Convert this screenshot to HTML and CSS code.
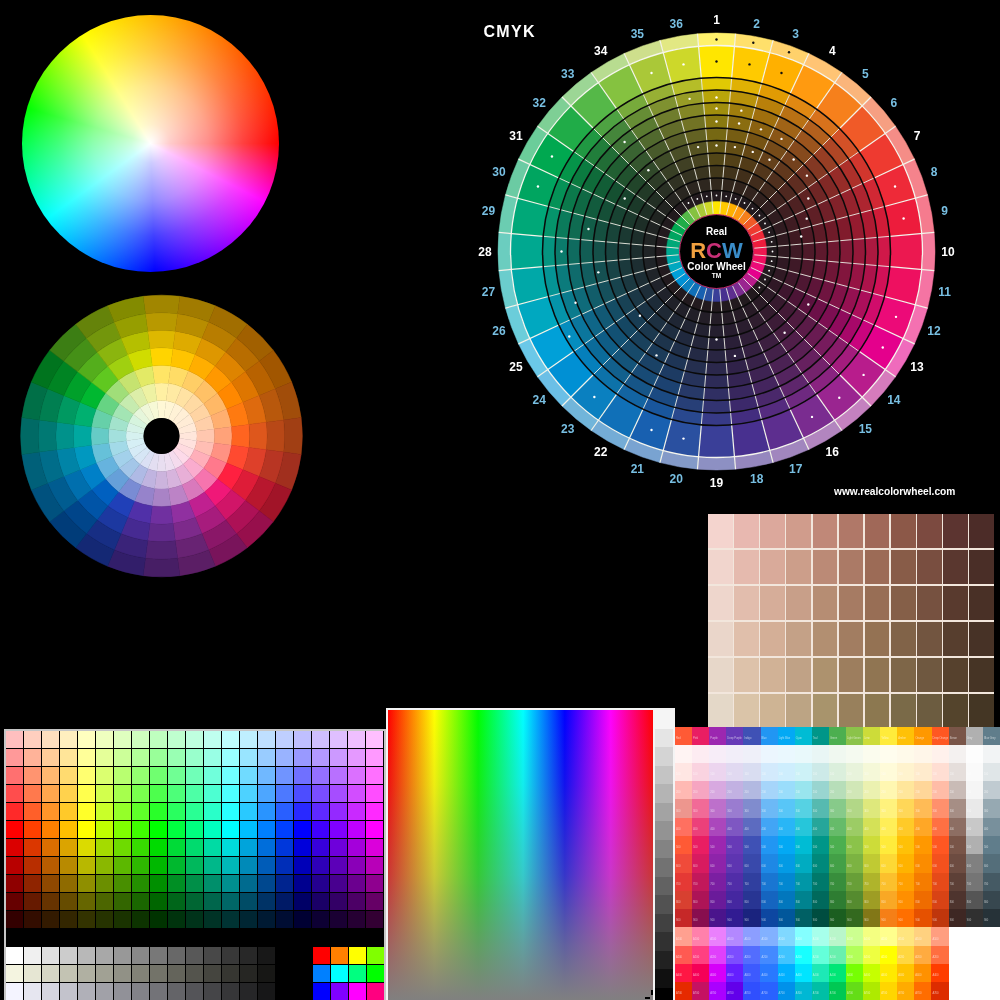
FILE: index.html
```html
<!DOCTYPE html>
<html lang="en">
<head>
<meta charset="utf-8">
<title>Colour wheels and palettes</title>
<link rel="stylesheet" href="styles.css">
</head>
<body>
<main class="board">
  <div class="piece hsv-wheel"></div>
  <svg class="piece tone-wheel" id="tone" viewBox="10 285 310 310"></svg>
  <svg class="piece rcw" id="rcw" viewBox="470 0 530 505"></svg>
  <div class="piece skin" id="skin"></div>
  <div class="piece web-frame">
    <div class="web-grid" id="web"></div>
    <div class="web-bottom">
      <div class="grey-grid" id="greys"></div>
      <div class="prim-grid" id="prims"></div>
    </div>
  </div>
  <div class="piece picker">
    <div class="picker-field">
      <span class="mark mark-a"></span>
      <span class="mark mark-b"></span>
    </div>
    <div class="picker-strip" id="strip"></div>
  </div>
  <div class="piece material">
    <div class="mat-main" id="mat"></div>
    <div class="mat-accent" id="acc"></div>
  </div>
</main>
<script src="app.js"></script>
</body>
</html>
```
FILE: styles.css
```css
html, body {
  margin: 0;
  padding: 0;
  background: #000;
}
.board {
  position: relative;
  width: 1000px;
  height: 1000px;
  overflow: hidden;
  background: #000;
  font-family: "Liberation Sans", Arial, sans-serif;
}
.piece {
  position: absolute;
  display: block;
}
.hsv-wheel {
  left: 21.5px;
  top: 14.5px;
  width: 257px;
  height: 257px;
  border-radius: 50%;
  filter: blur(0.5px);
  background:
    radial-gradient(circle closest-side, #fff 0%, rgba(255,255,255,0.8) 15%, rgba(255,255,255,0.55) 45%, rgba(255,255,255,0.25) 72%, rgba(255,255,255,0) 100%),
    conic-gradient(#ffbc00 0deg, #ff0000 90deg, #ff00ff 117deg, #0000ff 178deg, #00ffff 234deg, #00ff00 286deg, #ffff00 328deg, #ffbc00 360deg);
}
.tone-wheel {
  left: 10px;
  top: 285px;
  width: 310px;
  height: 310px;
  filter: blur(0.5px);
}
.rcw {
  left: 470px;
  top: 0;
  width: 530px;
  height: 505px;
  filter: blur(0.4px);
}
.lbl {
  font: bold 12px "Liberation Sans", Arial, sans-serif;
  text-anchor: middle;
  dominant-baseline: central;
  fill: #78bfe2;
}
.lbl-w { fill: #fff; }
.cmyk {
  font: bold 16px "Liberation Sans", Arial, sans-serif;
  letter-spacing: 1.3px;
  fill: #fff;
}
.url {
  font: bold 10.2px "Liberation Sans", Arial, sans-serif;
  fill: #fff;
}
.hub {
  font: bold 10px "Liberation Sans", Arial, sans-serif;
  text-anchor: middle;
  fill: #fff;
}
.hub-big {
  font: bold 22px "Liberation Sans", Arial, sans-serif;
  text-anchor: middle;
}
.hub-tm { font-size: 6.5px; }

.skin {
  left: 708px;
  top: 514px;
  width: 286px;
  height: 214px;
  display: grid;
  grid-template-columns: repeat(11, 1fr);
  grid-template-rows: repeat(6, 1fr);
  gap: 1.5px;
  background: #f2e6dc;
  filter: blur(0.3px);
}

.web-frame {
  left: 4px;
  top: 729px;
  width: 378px;
  height: 280px;
  background: #000;
  border: 2px solid #c6c6c6;
  border-bottom: 0;
  display: flex;
  flex-direction: column;
  gap: 19px;
}
.web-grid {
  display: grid;
  grid-template-columns: repeat(21, 17px);
  grid-auto-rows: 17px;
  gap: 1px;
}
.web-bottom {
  display: flex;
  justify-content: space-between;
}
.grey-grid {
  display: grid;
  grid-template-columns: repeat(15, 17px);
  grid-auto-rows: 17px;
  gap: 1px;
}
.prim-grid {
  display: grid;
  grid-template-columns: repeat(4, 17.5px);
  grid-auto-rows: 17px;
  gap: 1px 0.5px;
}

.picker {
  left: 386px;
  top: 708px;
  width: 285px;
  height: 300px;
  display: flex;
  gap: 2px;
  border: 2px solid #f4f4f4;
  border-bottom: 0;
  background: #f4f4f4;
}
.picker-field {
  position: relative;
  width: 265px;
  height: 300px;
  background:
    linear-gradient(rgba(128,128,128,0) 0%, rgba(128,128,128,0.14) 25%, rgba(128,128,128,0.42) 55%, rgba(128,128,128,0.75) 78%, rgba(128,128,128,1) 97%),
    linear-gradient(90deg, #f00 0%, #ff0 17.5%, #0f0 34%, #0ff 51%, #00f 66.7%, #f0f 84%, #f00 100%);
}
.mark {
  position: absolute;
  background: #000;
}
.mark-a {
  left: 263px;
  top: 280px;
  width: 2px;
  height: 5px;
}
.mark-b {
  left: 257px;
  top: 287px;
  width: 5px;
  height: 2px;
}
.picker-strip {
  width: 18px;
  display: flex;
  flex-direction: column;
}
.step { height: 18.5px; flex: none; }

.material {
  left: 675px;
  top: 727px;
  width: 325px;
  height: 273px;
  background: #fff;
  overflow: hidden;
  filter: blur(0.5px);
}
.mat-main {
  display: grid;
  grid-template-columns: repeat(19, 1fr);
  grid-template-rows: 17.5px repeat(10, 18.3px);
}
.mat-accent {
  display: grid;
  grid-template-columns: repeat(16, 17.105px);
  grid-auto-rows: 18.2px;
}
.mat-cell {
  display: flex;
  align-items: flex-end;
  justify-content: flex-start;
  padding: 0 0 5px 1px;
  min-width: 0;
  overflow: hidden;
  white-space: nowrap;
  font: 2.6px "Liberation Sans", Arial, sans-serif;
  color: rgba(255,255,255,0.6);
  box-sizing: border-box;
}
```
FILE: app.js
```js
var NS = 'http://www.w3.org/2000/svg';

function hex(c) { return [parseInt(c.slice(1,3),16), parseInt(c.slice(3,5),16), parseInt(c.slice(5,7),16)]; }
function mix(a, b, t) {
  var x = hex(a), y = hex(b), o = '#';
  for (var i = 0; i < 3; i++) {
    var v = Math.round(x[i] + (y[i] - x[i]) * t);
    v = Math.max(0, Math.min(255, v));
    o += (v < 16 ? '0' : '') + v.toString(16);
  }
  return o;
}
function el(parent, name, attrs, text) {
  var e = document.createElementNS(NS, name);
  for (var k in attrs) e.setAttribute(k, attrs[k]);
  if (text !== undefined) e.textContent = text;
  parent.appendChild(e);
  return e;
}
function pt(cx, cy, r, deg) {
  var a = (deg - 90) * Math.PI / 180;
  return [cx + r * Math.cos(a), cy + r * Math.sin(a)];
}
function sector(cx, cy, r0, r1, a0, a1) {
  var p = pt(cx,cy,r1,a0), q = pt(cx,cy,r1,a1), s = pt(cx,cy,r0,a1), t = pt(cx,cy,r0,a0);
  return 'M' + p[0].toFixed(2) + ' ' + p[1].toFixed(2) +
    'A' + r1 + ' ' + r1 + ' 0 0 1 ' + q[0].toFixed(2) + ' ' + q[1].toFixed(2) +
    'L' + s[0].toFixed(2) + ' ' + s[1].toFixed(2) +
    'A' + r0 + ' ' + r0 + ' 0 0 0 ' + t[0].toFixed(2) + ' ' + t[1].toFixed(2) + 'Z';
}
function wedge(svg, cx, cy, r0, r1, a0, a1, fill) {
  el(svg, 'path', { d: sector(cx,cy,r0,r1,a0,a1), fill: fill, stroke: fill, 'stroke-width': 0.5 });
}
function cell(parent, color, cls, text) {
  var d = document.createElement('div');
  d.style.background = color;
  if (cls) d.className = cls;
  if (text) d.textContent = text;
  parent.appendChild(d);
}

/* ---------- 24-sector tone wheel ---------- */
(function () {
  var svg = document.getElementById('tone');
  var cx = 161.5, cy = 436, step = 17.55;
  var hues = ['#ffd400','#ffc400','#ffae00','#ff9800','#ff8800','#ff7a10','#ff6420','#ff4a30',
    '#ff2040','#f01878','#c02090','#9030a0','#7030a0','#5030a8','#2040b8','#0060c0',
    '#0080c8','#0098c0','#00a8a0','#00b070','#00b830','#60c820','#a0d010','#d0dc00'];
  var rings = [[.84,'#ffffff'],[.64,'#ffffff'],[.4,'#ffffff'],[0,'#000000'],[.13,'#000000'],[.28,'#000000'],[.37,'#000000']];
  hues.forEach(function (h, i) {
    rings.forEach(function (ring, j) {
      wedge(svg, cx, cy, 18 + j * step, 18 + (j + 1) * step, i * 15 - 7.5, i * 15 + 7.5, mix(h, ring[1], ring[0]));
    });
  });
  el(svg, 'circle', { cx: cx, cy: cy, r: 18, fill: '#000' });
})();

/* ---------- Real Color Wheel ---------- */
(function () {
  var svg = document.getElementById('rcw');
  var cx = 716.5, cy = 251.5;
  var segs = ['#ffe600','#ffca00','#ffb000','#ff9a10','#f6801c','#f05a28','#ee3a30','#ee2a38','#ed1c3c',
    '#ec1850','#ee1060','#ec0a78','#e4008c','#b81c8c','#9a2590','#7a2c90','#5d2e8f','#48308f',
    '#3a3f98','#2a50a0','#1860b0','#1070b8','#0a80c0','#0090d4','#00a0d8','#00a8c0','#00a8a8',
    '#00a890','#00a878','#00a560','#00a850','#20ac48','#55b848','#85c240','#aac838','#cdd82a'];
  var radii = [174, 161.5, 149, 136.5, 123.5, 111, 98.5, 86, 73.5, 61, 50];
  var dark = '#221a1e';

  segs.forEach(function (c, i) {
    var a0 = i * 10 - 5, a1 = i * 10 + 5;
    wedge(svg, cx, cy, 206, 218.5, a0, a1, mix(c, '#ffffff', 0.42));
    wedge(svg, cx, cy, 174, 206, a0, a1, c);
    for (var b = 0; b < radii.length - 1; b++) {
      var t = 0.14 + 0.86 * Math.pow(b / 9, 0.72);
      wedge(svg, cx, cy, radii[b + 1], radii[b], a0, a1, mix(c, dark, t));
    }
    wedge(svg, cx, cy, 37, 50, a0, a1, c);
  });

  /* radial separators */
  for (var k = 0; k < 36; k++) {
    var ang = k * 10 + 5;
    var a = pt(cx, cy, 218.5, ang), b = pt(cx, cy, 174, ang), c2 = pt(cx, cy, 38, ang);
    el(svg, 'line', { x1: a[0], y1: a[1], x2: b[0], y2: b[1], stroke: '#f4f4ea', 'stroke-width': 1.2 });
    el(svg, 'line', { x1: b[0], y1: b[1], x2: c2[0], y2: c2[1], stroke: '#f0f0e8', 'stroke-width': 0.9 });
  }

  /* rings */
  el(svg, 'circle', { cx: cx, cy: cy, r: 206, fill: 'none', stroke: '#f6f6ee', 'stroke-width': 1.3 });
  radii.slice(0, 10).forEach(function (r) {
    el(svg, 'circle', { cx: cx, cy: cy, r: r, fill: 'none', stroke: '#0a0a0a', 'stroke-width': 1.5 });
  });

  /* printer's dots: [segment, radius, colour] */
  var dots = [[1,212,0],[1,190,0],[2,212,0],[2,190,0],[3,212,0],[3,190,0],
    [36,190,1],[35,190,1],[31,190,1],[30,190,1],[13,192,1],[12,191,1],[14,192,1],[15,191,1],[16,191,1],
    [8,190,1],[9,190,1],[20,190,1],[21,190,1],[23,190,1],[25,170,1],[28,155,1],[33,143,1],[33,106,1],
    [31,106,1],[36,155,1],[36,106,1],[1,154,1],[1,143,1],[1,130,1],[1,106,1],[2,143,1],[2,130,1],[2,106,1],
    [3,130,1],[3,106,1],[4,130,1],[4,106,1],[5,120,1],[6,118,1],[7,106,1],[8,96,1],[9,86,1],[13,106,1],[15,106,1],
    [18,106,1],[19,88,1],[22,120,1],[24,100,1],[26,150,1],[27,120,1],[29,130,1]];
  for (var s = 0; s < 17; s++) dots.push([(s + 33) % 36 + 1, 56, 1]);
  dots.forEach(function (d) {
    var p = pt(cx, cy, d[1], (d[0] - 1) * 10);
    el(svg, 'circle', { cx: p[0], cy: p[1], r: d[1] > 70 ? 1.2 : 0.9, fill: d[2] ? '#fff' : '#111' });
  });

  /* hub */
  el(svg, 'circle', { cx: cx, cy: cy, r: 37, fill: '#000', stroke: '#c82c6c', 'stroke-width': 1 });
  el(svg, 'text', { class: 'hub', x: cx, y: 235 }, 'Real');
  var big = el(svg, 'text', { class: 'hub-big', x: cx, y: 258 });
  [['R','#f0a040'],['C','#c83078'],['W','#3a8cc8']].forEach(function (l) {
    el(big, 'tspan', { fill: l[1] }, l[0]);
  });
  el(svg, 'text', { class: 'hub', x: cx, y: 270 }, 'Color Wheel');
  el(svg, 'text', { class: 'hub hub-tm', x: cx, y: 278 }, 'TM');

  /* numbers */
  for (var n = 1; n <= 36; n++) {
    var q = pt(cx, cy, 231.5, (n - 1) * 10);
    el(svg, 'text', { class: n % 3 === 1 ? 'lbl lbl-w' : 'lbl', x: q[0], y: q[1] }, String(n));
  }
  el(svg, 'text', { class: 'cmyk', x: 483.5, y: 37 }, 'CMYK');
  el(svg, 'text', { class: 'url', x: 834, y: 495 }, 'www.realcolorwheel.com');
})();

/* ---------- skin tones ---------- */
(function () {
  var top = ['#f4d4ce','#e8b8b0','#dca89c','#d09c8c','#c08878','#b07868','#a06858','#8c5848','#7c4a40','#5c3430','#4c2c28'];
  var low = ['#e4d8c8','#dac4a8','#ceb494','#bca484','#a8946c','#98805c','#8c7850','#7a6a48','#6c5c40','#54442c','#443624'];
  var box = document.getElementById('skin');
  for (var r = 0; r < 6; r++) for (var c = 0; c < 11; c++) cell(box, mix(top[c], low[c], r / 5));
})();

/* ---------- web palette ---------- */
(function () {
  var hues = ['#ff0000','#ff4000','#ff8000','#ffbf00','#ffff00','#bfff00','#80ff00','#40ff00','#00ff00','#00ff40','#00ff80',
    '#00ffbf','#00ffff','#00bfff','#0080ff','#0040ff','#0000ff','#4000ff','#8000ff','#bf00ff','#ff00ff'];
  var steps = [['#ffffff',.75],['#ffffff',.6],['#ffffff',.44],['#ffffff',.3],['#ffffff',.16],['#000000',0],
    ['#000000',.14],['#000000',.28],['#000000',.44],['#000000',.6],['#000000',.8]];
  var web = document.getElementById('web');
  steps.forEach(function (st) { hues.forEach(function (h) { cell(web, mix(h, st[0], st[1])); }); });

  var g = ['#ffffff','#f0f0f0','#e0e0e0','#cccccc','#b8b8b8','#a8a8a8','#989898','#888888','#787878','#686868','#585858','#484848','#383838','#282828','#181818'];
  var tint = ['#ffffff','#f4f4e0','#f4f4ff'];
  var greys = document.getElementById('greys');
  tint.forEach(function (t) {
    g.forEach(function (v) {
      var a = hex(v), b = hex(t), o = '#';
      for (var i = 0; i < 3; i++) { var x = Math.round(a[i] * b[i] / 255); o += (x < 16 ? '0' : '') + x.toString(16); }
      cell(greys, o);
    });
  });
  var prims = document.getElementById('prims');
  ['#ff0000','#ff8000','#ffff00','#80ff00','#0080ff','#00ffff','#00ff80','#00ff00','#0000ff','#8000ff','#ff00ff','#ff0080']
    .forEach(function (c) { cell(prims, c); });

  var strip = document.getElementById('strip');
  for (var i = 0; i < 16; i++) {
    var v = Math.round(245 - i * 245 / 15);
    cell(strip, mix('#000000', '#ffffff', v / 255), 'step');
  }
})();

/* ---------- material palette ---------- */
(function () {
  var names = ['Red','Pink','Purple','Deep Purple','Indigo','Blue','Light Blue','Cyan','Teal','Green','Light Green','Lime','Yellow','Amber','Orange','Deep Orange','Brown','Grey','Blue Grey'];
  var t = [
    ['#ffd8d4','#ffa8a0','#ec9088','#ff7060','#ff5a35','#f04b3a','#e53935','#d84030','#c62828'],
    ['#f8bbd0','#f48fb1','#f06292','#ec407a','#e91e63','#d81b60','#c2185b','#ad1457','#880e4f'],
    ['#e1bee7','#ce93d8','#ba68c8','#ab47bc','#9c27b0','#8e24aa','#7b1fa2','#6a1b9a','#4a148c'],
    ['#d1c4e9','#b39ddb','#9575cd','#7e57c2','#673ab7','#5e35b1','#512da8','#4527a0','#311b92'],
    ['#c5cae9','#9fa8da','#7986cb','#5c6bc0','#3f51b5','#3949ab','#303f9f','#283593','#1a237e'],
    ['#bbdefb','#90caf9','#64b5f6','#42a5f5','#2196f3','#1e88e5','#1976d2','#1565c0','#0d47a1'],
    ['#b3e5fc','#81d4fa','#4fc3f7','#29b6f6','#03a9f4','#039be5','#0288d1','#0277bd','#01579b'],
    ['#b2ebf2','#80deea','#4dd0e1','#26c6da','#00bcd4','#00acc1','#0097a7','#00838f','#006064'],
    ['#b2dfdb','#80cbc4','#4db6ac','#26a69a','#009688','#00897b','#00796b','#00695c','#004d40'],
    ['#c8e6c9','#a5d6a7','#81c784','#66bb6a','#4caf50','#43a047','#388e3c','#2e7d32','#1b5e20'],
    ['#dcedc8','#c5e1a5','#aed581','#9ccc65','#8bc34a','#7cb342','#689f38','#558b2f','#33691e'],
    ['#f0f4c3','#e6ee9c','#dce775','#d4e157','#cddc39','#c0ca33','#afb42b','#9e9d24','#827717'],
    ['#fff9c4','#fff59d','#fff176','#ffee58','#ffeb3b','#fdd835','#fbc02d','#f9a825','#f57f17'],
    ['#ffecb3','#ffe082','#ffd54f','#ffca28','#ffc107','#ffb300','#ffa000','#ff8f00','#ff6f00'],
    ['#ffe0b2','#ffcc80','#ffb74d','#ffa726','#ff9800','#fb8c00','#f57c00','#ef6c00','#e65100'],
    ['#ffccbc','#ffab91','#ff8a65','#ff7043','#ff5722','#f4511e','#e64a19','#d84315','#bf360c'],
    ['#d7ccc8','#bcaaa4','#a1887f','#8d6e63','#795548','#6d4c41','#5d4037','#4e342e','#3e2723'],
    ['#f8f8f8','#f2f2f2','#e8e8e8','#c8c8c8','#b0b0b0','#808080','#757575','#555555','#303030'],
    ['#cfd8dc','#b0bec5','#90a4ae','#78909c','#607d8b','#546e7a','#455a64','#37474f','#263238']
  ];
  var labels = ['50','100','200','300','400','500','600','700','800','900'];
  var lift = [0.72, 0.35, 0.2, 0.05, 0, 0, 0, 0, 0, 0];
  var mat = document.getElementById('mat');
  t.forEach(function (col, i) { cell(mat, col[4], 'mat-cell', names[i]); });
  for (var r = 0; r < 10; r++) {
    t.forEach(function (col) {
      var c = mix(col[Math.max(0, r - 1)], '#ffffff', lift[r]);
      cell(mat, c, 'mat-cell', r === 0 ? '' : labels[r]);
    });
  }
  var acc = [
    ['#ffa090','#ff80ab','#ea80fc','#b388ff','#8c9eff','#82b1ff','#80d8ff','#84ffff','#a7ffeb','#b9f6ca','#ccff90','#f4ff81','#ffff8d','#ffe57f','#ffd180','#ff9e80'],
    ['#ff5a52','#ff4081','#e040fb','#7c4dff','#536dfe','#448aff','#40c4ff','#18ffff','#64ffda','#69f0ae','#b2ff59','#eeff41','#ffff00','#ffd740','#ffab40','#ff6e40'],
    ['#ff1744','#f50057','#d500f9','#651fff','#3d5afe','#2979ff','#00b0ff','#00e5ff','#1de9b6','#00e676','#76ff03','#c6ff00','#ffea00','#ffc400','#ff9100','#ff3d00'],
    ['#e62a00','#c51162','#aa00ff','#6200ea','#304ffe','#2962ff','#0091ea','#00b8d4','#00bfa5','#00c853','#64dd17','#aeea00','#ffd600','#ffab00','#ff6d00','#dd2c00']
  ];
  var labA = ['A100','A200','A400','A700'];
  var box = document.getElementById('acc');
  acc.forEach(function (row, i) { row.forEach(function (c) { cell(box, c, 'mat-cell', labA[i]); }); });
})();
```
